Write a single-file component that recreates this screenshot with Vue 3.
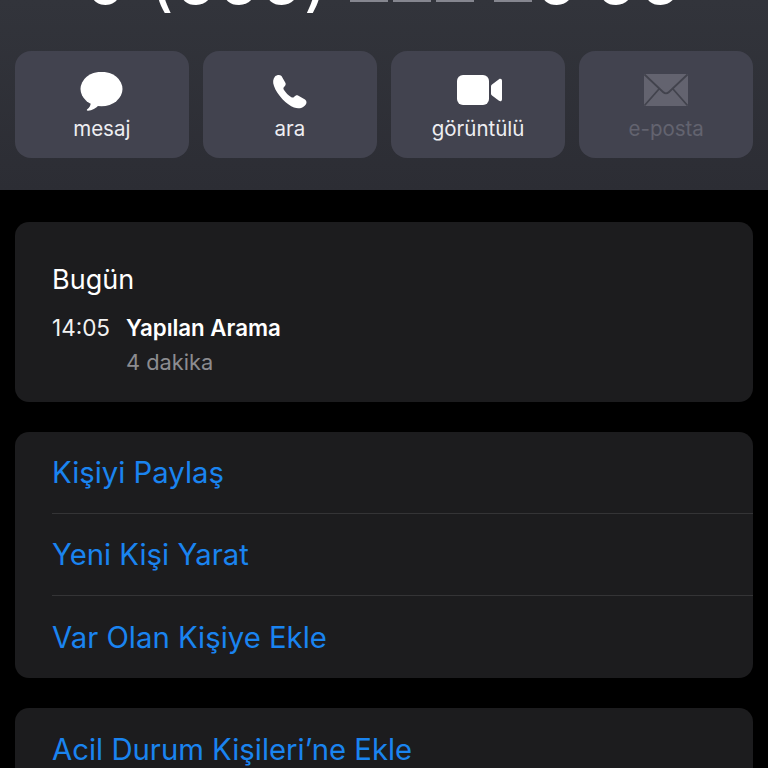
<script setup>
const linkGroup = ['Kişiyi Paylaş', 'Yeni Kişi Yarat', 'Var Olan Kişiye Ekle']
</script>

<template>
  <div class="page">
    <header class="head">
      <div class="number">
        <span class="lead">0 (555)</span>
        <span class="bars"><i></i><i></i><i></i><b></b></span>
        <span class="tail">5</span>
        <span class="tail2">55</span>
      </div>
      <nav class="actions">
        <div class="act">
          <svg class="ico" viewBox="0 0 60 40" width="60" height="40">
            <ellipse cx="29.500" cy="17" rx="21" ry="17.200" fill="#fff"/>
            <path d="M19 29C19 33 17.500 36 15 37.500C14.500 38.200 15 38.800 16 38.700C20 38.500 24 36.500 27 33Z" fill="#fff"/>
          </svg>
          <span>mesaj</span>
        </div>
        <div class="act">
          <svg class="ico" viewBox="-13 -2 60 40" width="60" height="40">
            <path fill="#fff" d="M2 2.500C4 .5 7 .5 8.500 2L12.500 9C13 10.500 12.500 11.500 11 13C10.500 13.500 10 14.500 11 16C13 19 15 21 18 23C19.500 24 20.500 23.500 21 23C22.500 21.500 23.500 21 25 21.500L32 25.500C34 27 34 29.500 32 31.500C29 34.500 25 35 21 33.500C14 31 4 21 1 12C-.5 8 0 5 2 2.500Z"/>
          </svg>
          <span>ara</span>
        </div>
        <div class="act">
          <svg class="ico" viewBox="0 0 60 40" width="60" height="40">
            <rect x="9" y="3" width="32" height="30" rx="6" fill="#fff"/>
            <path d="M43 14.500C43 13.500 43.500 12.800 44.300 12.200L51 7.200C52.500 6.200 54 7 54 8.800V27.200C54 29 52.500 29.800 51 28.800L44.300 23.800C43.500 23.200 43 22.500 43 21.500Z" fill="#fff"/>
          </svg>
          <span>görüntülü</span>
        </div>
        <div class="act off">
          <svg class="ico" viewBox="0 0 60 40" width="60" height="40">
            <rect x="8" y="2" width="44" height="32" rx="1.500" fill="#63636f"/>
            <path d="M8.500 2.500L27 20C28.800 21.700 31.200 21.700 33 20L51.500 2.500M8.500 33.500L23 17M51.500 33.500L37 17" fill="none" stroke="#42434d" stroke-width="1.800"/>
          </svg>
          <span>e-posta</span>
        </div>
      </nav>
    </header>

    <main class="list">
      <section class="card recents">
        <h2>Bugün</h2>
        <div class="call">
          <span class="time">14:05</span>
          <div class="detail">
            <strong>Yapılan Arama</strong>
            <span class="length">4 dakika</span>
          </div>
        </div>
      </section>
      <section class="card">
        <div v-for="item in linkGroup" :key="item" class="row">{{ item }}</div>
      </section>
      <section class="card">
        <div class="row">Acil Durum Kişileri’ne Ekle</div>
      </section>
    </main>
  </div>
</template>

<style>
html, body { margin: 0; background: #000; }
</style>

<style scoped>
.page {
  width: 768px;
  height: 768px;
  overflow: hidden;
  background: #000;
  font-family: Inter, "Noto Sans", sans-serif;
}
.head {
  height: 190px;
  box-sizing: border-box;
  background: linear-gradient(#32343b, #2c2d34);
  padding: 0 15px;
  overflow: hidden;
}
.number {
  height: 51px;
  display: flex;
  align-items: flex-start;
  color: #fff;
  font-size: 68px;
  line-height: 68px;
  white-space: nowrap;
}
.lead, .tail, .tail2 {
  margin-top: -55px;
}
.lead {
  margin-left: 69px;
  width: 266px;
  flex: none;
  letter-spacing: 1.500px;
}
.bars {
  display: flex;
  gap: 5px;
}
.bars i, .bars b {
  display: block;
  width: 38px;
  height: 1.500px;
  background: #85868f;
}
.bars b { margin-left: 15px; }
.tail { margin-left: 4px; }
.tail2 { margin-left: 18px; letter-spacing: 3px; }
.actions {
  display: grid;
  grid-template-columns: repeat(4, 1fr);
  gap: 14.500px;
}
.act {
  height: 107px;
  border-radius: 16px;
  background: #42434f;
  display: flex;
  flex-direction: column;
  align-items: center;
  padding-top: 21px;
  box-sizing: border-box;
  color: #eeeef2;
  font-size: 20.500px;
  line-height: 24px;
}
.ico { display: block; height: 40px; margin-bottom: 5px; }
.off { color: #63636f; }
.list {
  padding: 32px 15px 0;
  display: flex;
  flex-direction: column;
  gap: 30px;
}
.card {
  background: #1c1c1e;
  border-radius: 14px;
  padding-left: 37px;
}
.recents {
  height: 180px;
  box-sizing: border-box;
  padding-top: 42px;
  color: #fff;
}
h2 {
  margin: 0;
  font-size: 27px;
  line-height: 32px;
  font-weight: 400;
}
.call {
  display: flex;
  margin-top: 17px;
  gap: 16px;
}
.time {
  font-size: 22.500px;
  line-height: 30px;
  color: #f2f2f2;
}
.detail {
  display: flex;
  flex-direction: column;
  gap: 4px;
  font-size: 22.300px;
  line-height: 30px;
  color: #8c8c90;
}
.detail strong {
  color: #fff;
  font-weight: 600;
}
.length { font-size: 21.800px; }
.row {
  height: 82px;
  box-sizing: border-box;
  display: flex;
  align-items: center;
  font-size: 29.300px;
  color: #1a84f0;
  border-bottom: 1px solid #343436;
}
.row:last-child { border-bottom: 0; }
</style>
